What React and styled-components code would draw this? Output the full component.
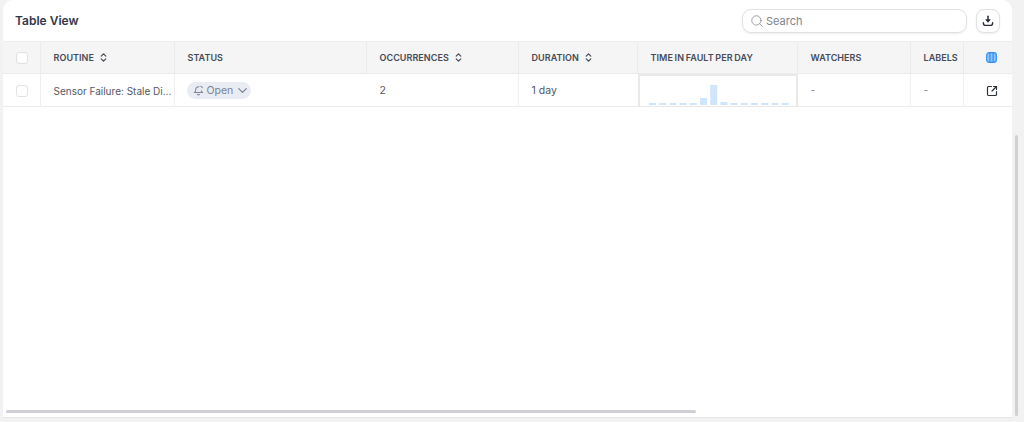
import React from 'react';
import styled, { createGlobalStyle } from 'styled-components';
import { ChevronDown, ChevronsUpDown, Search, SquareArrowOutUpRight } from 'lucide-react';

const GlobalStyle = createGlobalStyle`
  html, body {
    margin: 0;
    height: 100%;
    overflow: hidden;
    background: #f2f2f3;
    font-family: Inter, "Liberation Sans", sans-serif;
  }
  #root {
    height: 100%;
  }
`;

const Page = styled.div`
  position: relative;
  box-sizing: border-box;
  height: 422px;
  padding: 0 12px 4px 3px;
`;

const Card = styled.section`
  height: 100%;
  background: #fff;
  border-radius: 10px 10px 0 0;
  border-bottom: 1px solid #e6e6e8;
  box-sizing: border-box;
`;

const Toolbar = styled.header`
  display: flex;
  align-items: center;
  height: 41px;
  padding: 0 12px;
`;

const Title = styled.h3`
  flex: 1;
  margin: 0;
  font-size: 12px;
  font-weight: 600;
  color: #33374a;
`;

const SearchBox = styled.label`
  display: flex;
  align-items: center;
  gap: 2px;
  box-sizing: border-box;
  width: 225px;
  height: 24px;
  padding: 0 7px;
  border: 1px solid #e0e1e5;
  border-radius: 9px;
  box-shadow: 0 1px 2px rgba(30, 30, 50, 0.08);
  color: #6d717c;
`;

const SearchInput = styled.input`
  flex: 1;
  min-width: 0;
  border: none;
  outline: none;
  padding: 0;
  background: transparent;
  font: 400 11px Inter, "Liberation Sans", sans-serif;
  &::placeholder {
    color: #80838d;
    opacity: 1;
  }
`;

const IconButton = styled.button`
  display: flex;
  align-items: center;
  justify-content: center;
  box-sizing: border-box;
  width: 24px;
  height: 24px;
  margin-left: 9px;
  padding: 0;
  background: #fff;
  border: 1px solid #e0e1e5;
  border-radius: 8px;
  box-shadow: 0 1px 2px rgba(30, 30, 50, 0.08);
  color: #2b2f3a;
`;

const columns = '38px 134px 192px 152px 119px 160px 113px 53px 48px';

const Row = styled.div`
  display: grid;
  grid-template-columns: ${columns};
  height: 33px;
  border-bottom: 1px solid #ebebed;
  box-sizing: border-box;
`;

const HeaderRow = styled(Row)`
  background: #f5f5f6;
  border-top: 1px solid #ededef;
`;

const HeadCell = styled.div`
  display: flex;
  align-items: center;
  gap: 4px;
  min-width: 0;
  padding-left: ${(p) => (p.$tail ? 8 : p.$box ? 0 : 12.5)}px;
  justify-content: ${(p) => (p.$tail || p.$box ? 'center' : 'flex-start')};
  border-right: 1px solid ${(p) => (p.$tail ? 'transparent' : '#ebebed')};
  font-size: 9px;
  font-weight: 600;
  letter-spacing: 0.05px;
  word-spacing: -0.6px;
  white-space: nowrap;
  color: #464a56;
`;

const Cell = styled.div`
  display: flex;
  align-items: center;
  min-width: 0;
  padding-left: ${(p) => (p.$tail ? 8 : p.$box ? 0 : 12.5)}px;
  justify-content: ${(p) => (p.$tail || p.$box ? 'center' : 'flex-start')};
  border-right: 1px solid ${(p) => (p.$noLine || p.$tail ? 'transparent' : '#efeff1')};
  font-size: 10.5px;
  color: ${(p) => (p.$dim ? '#8c8f98' : '#54575f')};
  white-space: nowrap;
`;

const ChartCell = styled.div`
  display: flex;
  align-items: flex-end;
  box-sizing: border-box;
  height: 33px;
  padding: 0 0 1px 9px;
  border: 2px solid #e9e9eb;
  border-bottom-width: 1px;
`;

const Checkbox = styled.span`
  box-sizing: border-box;
  width: 12px;
  height: 12px;
  background: #fff;
  border: 1px solid #e0e1e4;
  border-radius: 3px;
`;

const RoutineName = styled.span`
  font-size: 10px;
`;

const StatusPill = styled.span`
  display: inline-flex;
  align-items: center;
  gap: 3px;
  height: 17px;
  padding: 0 1px 0 6px;
  margin-left: -1px;
  background: #e9ecf2;
  border-radius: 9px;
  font-size: 10.5px;
  color: #7b8395;
`;

const PillChevron = styled(ChevronDown)`
  margin-left: -1px;
`;

const Scrollbar = styled.div`
  position: absolute;
  background: #cfcfd5;
  border-radius: 2px;
`;

const HorizontalBar = styled(Scrollbar)`
  left: 6px;
  top: 410px;
  width: 690px;
  height: 3px;
`;

const VerticalBar = styled(Scrollbar)`
  left: 1015px;
  top: 135px;
  width: 3px;
  height: 281px;
`;

const SortIcon = () => <ChevronsUpDown size={11} strokeWidth={2.6} color="#464a56" />;

const DownloadIcon = () => (
  <svg width="12" height="12" viewBox="0 0 12 12" fill="none">
    <path d="M6 1.2v5.2" stroke="currentColor" strokeWidth="1.5" strokeLinecap="round" />
    <path d="M3.7 4.7 6 7.2l2.3-2.5z" fill="currentColor" stroke="currentColor" strokeWidth="0.8" strokeLinejoin="round" />
    <path d="M1.4 7.6v.6c0 1.4.9 2.2 2.2 2.2h4.8c1.3 0 2.2-.8 2.2-2.2v-.6" stroke="currentColor" strokeWidth="1.4" strokeLinecap="round" />
  </svg>
);

const ColumnsIcon = () => (
  <svg width="11" height="11" viewBox="0 0 11 11" fill="none">
    <rect x="0.7" y="0.7" width="9.6" height="9.6" rx="2.4" fill="#8fc4fb" stroke="#2f8ff2" strokeWidth="1.2" />
    <path d="M3.9 1v9M7.1 1v9" stroke="#2f8ff2" strokeWidth="1.2" />
  </svg>
);

const BellIcon = () => (
  <svg width="11" height="11" viewBox="0 0 12 12" fill="none" stroke="#7b8395" strokeWidth="1.1" strokeLinecap="round">
    <path d="M6.600 1.900C4.700 1.500 3 2.900 3 4.800c0 2.200-.9 3-1.300 3.500h8.600c-.5-.5-1-1.100-1.200-2.100" />
    <path d="M4.900 10.300c.5.500 1.700.500 2.200 0" />
    <path d="M8.600 1.300c.7.300 1.300.9 1.600 1.700" />
  </svg>
);

const faultDays = [1, 1, 1, 1, 1, 6, 19, 2, 1, 1, 1, 1, 1, 1];

const FaultChart = () => (
  <svg width="146" height="20" viewBox="0 0 146 20">
    {faultDays.map((h, i) => (
      <rect key={i} x={i * 10.2} y={20 - h - 1} width="7" height={h + 1} fill="#cfe5fb" />
    ))}
  </svg>
);

export default function App() {
  return (
    <Page>
      <GlobalStyle />
      <Card>
        <Toolbar>
          <Title>Table View</Title>
          <SearchBox>
            <Search size={14} strokeWidth={1.1} />
            <SearchInput placeholder="Search" />
          </SearchBox>
          <IconButton aria-label="Download">
            <DownloadIcon />
          </IconButton>
        </Toolbar>
        <HeaderRow>
          <HeadCell $box><Checkbox /></HeadCell>
          <HeadCell>ROUTINE <SortIcon /></HeadCell>
          <HeadCell>STATUS</HeadCell>
          <HeadCell>OCCURRENCES <SortIcon /></HeadCell>
          <HeadCell>DURATION <SortIcon /></HeadCell>
          <HeadCell>TIME IN FAULT PER DAY</HeadCell>
          <HeadCell>WATCHERS</HeadCell>
          <HeadCell>LABELS</HeadCell>
          <HeadCell $tail><ColumnsIcon /></HeadCell>
        </HeaderRow>
        <Row>
          <Cell $box><Checkbox /></Cell>
          <Cell><RoutineName>Sensor Failure: Stale Di...</RoutineName></Cell>
          <Cell $noLine>
            <StatusPill>
              <BellIcon />
              Open
              <PillChevron size={15} strokeWidth={2} />
            </StatusPill>
          </Cell>
          <Cell>2</Cell>
          <Cell $noLine>1 day</Cell>
          <ChartCell><FaultChart /></ChartCell>
          <Cell $dim>-</Cell>
          <Cell $dim>-</Cell>
          <Cell $tail>
            <SquareArrowOutUpRight size={12} strokeWidth={2.3} color="#2b2f3a" />
          </Cell>
        </Row>
      </Card>
      <HorizontalBar />
      <VerticalBar />
    </Page>
  );
}
